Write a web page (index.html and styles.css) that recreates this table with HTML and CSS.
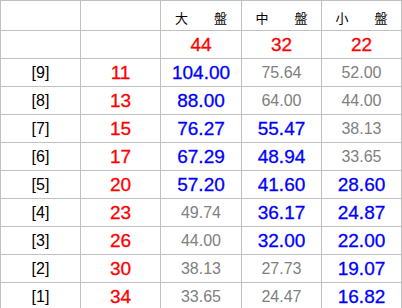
FILE: index.html
```html
<!DOCTYPE html>
<html>
<head>
<meta charset="utf-8">
<link rel="stylesheet" href="styles.css">
</head>
<body>
<table class="grid">
  <tr class="head">
    <td></td><td></td>
    <td class="cjk">大　　盤</td>
    <td class="cjk">中　　盤</td>
    <td class="cjk">小　　盤</td>
  </tr>
  <tr>
    <td></td><td></td>
    <td class="red">44</td>
    <td class="red">32</td>
    <td class="red">22</td>
  </tr>
  <tr><td class="lbl">[9]</td><td class="red">11</td><td class="blue">104.00</td><td class="gray">75.64</td><td class="gray">52.00</td></tr>
  <tr><td class="lbl">[8]</td><td class="red">13</td><td class="blue">88.00</td><td class="gray">64.00</td><td class="gray">44.00</td></tr>
  <tr><td class="lbl">[7]</td><td class="red">15</td><td class="blue">76.27</td><td class="blue">55.47</td><td class="gray">38.13</td></tr>
  <tr><td class="lbl">[6]</td><td class="red">17</td><td class="blue">67.29</td><td class="blue">48.94</td><td class="gray">33.65</td></tr>
  <tr><td class="lbl">[5]</td><td class="red">20</td><td class="blue">57.20</td><td class="blue">41.60</td><td class="blue">28.60</td></tr>
  <tr><td class="lbl">[4]</td><td class="red">23</td><td class="gray">49.74</td><td class="blue">36.17</td><td class="blue">24.87</td></tr>
  <tr><td class="lbl">[3]</td><td class="red">26</td><td class="gray">44.00</td><td class="blue">32.00</td><td class="blue">22.00</td></tr>
  <tr><td class="lbl">[2]</td><td class="red">30</td><td class="gray">38.13</td><td class="gray">27.73</td><td class="blue">19.07</td></tr>
  <tr><td class="lbl">[1]</td><td class="red">34</td><td class="gray">33.65</td><td class="gray">24.47</td><td class="blue">16.82</td></tr>
</table>
</body>
</html>
```

FILE: styles.css
```css
html, body {
  margin: 0;
  padding: 0;
  background: #ffffff;
}
.grid {
  border-collapse: collapse;
  width: 402px;
  table-layout: fixed;
  font-family: "Liberation Sans", Arial, sans-serif;
}
.grid td {
  border: 1px solid #c0c0c0;
  height: 27px;
  padding: 0;
  text-align: center;
  vertical-align: middle;
  line-height: 1;
  white-space: nowrap;
}
.grid td:nth-child(1), .grid td:nth-child(2) { width: 79px; }
.grid td:nth-child(3) { width: 80px; }
.grid .head td {
  height: 26px;
}
.cjk {
  font-family: "Noto Sans CJK JP", "Noto Sans CJK SC", sans-serif;
  font-size: 13px;
  color: #000;
  padding-top: 3px !important;
}
.lbl {
  font-size: 16px;
  color: #000;
}
.red {
  color: #ff0000;
  font-size: 19px;
  -webkit-text-stroke: 0.3px #ff0000;
}
.blue {
  color: #0000ff;
  font-size: 19px;
  -webkit-text-stroke: 0.3px #0000ff;
}
.gray {
  color: #808080;
  font-size: 16px;
}
```
